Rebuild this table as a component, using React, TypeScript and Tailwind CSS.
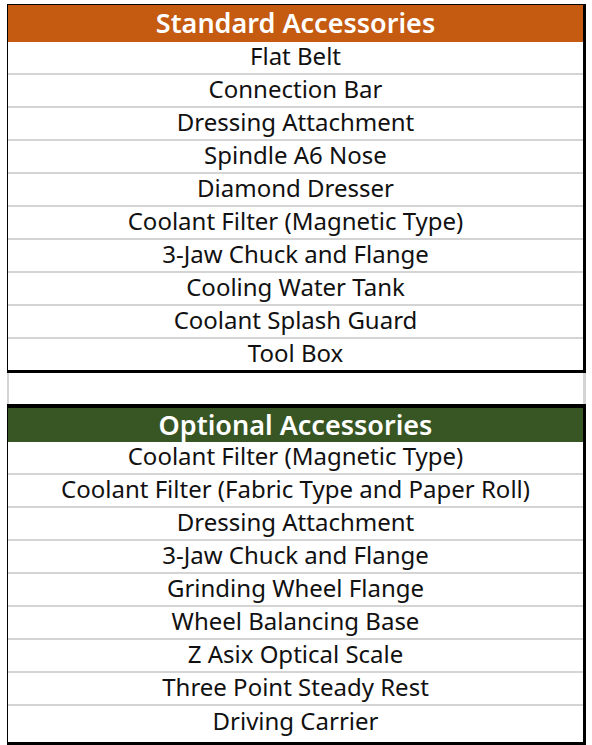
import React from "react";

const standard = [
  "Flat Belt",
  "Connection Bar",
  "Dressing Attachment",
  "Spindle A6 Nose",
  "Diamond Dresser",
  "Coolant Filter (Magnetic Type)",
  "3-Jaw Chuck and Flange",
  "Cooling Water Tank",
  "Coolant Splash Guard",
  "Tool Box",
];

const optional = [
  "Coolant Filter (Magnetic Type)",
  "Coolant Filter (Fabric Type and Paper Roll)",
  "Dressing Attachment",
  "3-Jaw Chuck and Flange",
  "Grinding Wheel Flange",
  "Wheel Balancing Base",
  "Z Asix Optical Scale",
  "Three Point Steady Rest",
  "Driving Carrier",
];

const rowCls =
  "h-[33px] pb-[3px] border-b-2 border-[#d4d4d4] flex items-center justify-center text-[24px] leading-none text-[#111] whitespace-nowrap";

export default function App() {
  return (
    <div
      className="w-[592px] h-[745px] bg-white pt-[4px] pl-[7px] overflow-hidden"
      style={{ fontFamily: '"Noto Sans", "Open Sans", sans-serif' }}
    >
      <div className="w-[579px] flex flex-col">
        <div className="border-t border-l border-r-[3px] border-b-[3px] border-black">
          <div className="h-[37px] pb-[3px] bg-[#c55a11] flex items-center justify-center text-white text-[27px] font-semibold leading-none">
            Standard Accessories
          </div>
          {standard.map((t, i) => {
            const last = i === standard.length - 1;
            return (
              <div
                key={i}
                className={
                  last
                    ? "h-[31px] pb-[3px] flex items-center justify-center text-[24px] leading-none text-[#111] whitespace-nowrap"
                    : rowCls
                }
              >
                {t}
              </div>
            );
          })}
        </div>
        <div className="h-[31px] border-l-2 border-r-[3px] border-[#d4d4d4]" />
        <div className="border-t-4 border-l border-r-[3px] border-b-[3px] border-black">
          <div className="h-[34px] pb-[2px] bg-[#385623] flex items-center justify-center text-white text-[27px] font-semibold leading-none">
            Optional Accessories
          </div>
          {optional.map((t, i) => {
            const last = i === optional.length - 1;
            return (
              <div
                key={i}
                className={
                  last
                    ? "h-[36px] pb-[6px] flex items-center justify-center text-[24px] leading-none text-[#111] whitespace-nowrap"
                    : rowCls
                }
              >
                {t}
              </div>
            );
          })}
        </div>
      </div>
    </div>
  );
}
